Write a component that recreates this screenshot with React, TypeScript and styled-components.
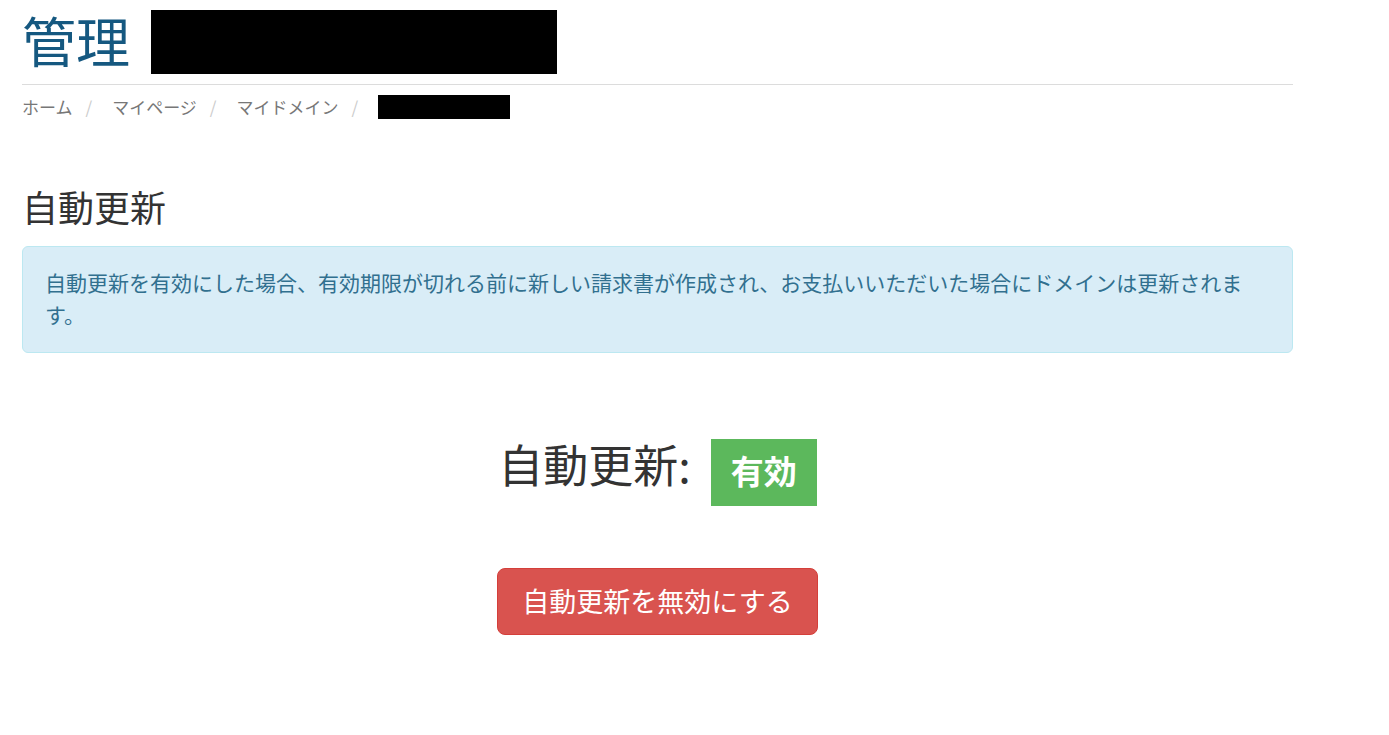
import React from "react";
import styled, { createGlobalStyle } from "styled-components";

const GlobalStyle = createGlobalStyle`
  html, body {
    margin: 0;
    padding: 0;
    background: #fff;
  }
  body {
    font-family: "Noto Sans CJK JP", "Liberation Sans", sans-serif;
    color: #333;
  }
`;

const Container = styled.div`
  width: 1271px;
  margin-left: 22px;
`;

const PageHeader = styled.header`
  display: flex;
  align-items: flex-start;
  gap: 21px;
  padding-top: 10px;
  padding-bottom: 10px;
  border-bottom: 1px solid #dcdcdc;
`;

const Title = styled.h1`
  margin: 0;
  font-size: 54px;
  line-height: 60px;
  font-weight: 400;
  color: #155880;
`;

const Redacted = styled.span<{ $w: number; $h: number }>`
  display: inline-block;
  width: ${(p) => p.$w}px;
  height: ${(p) => p.$h}px;
  background: #000;
  flex-shrink: 0;
`;

const Breadcrumb = styled.nav`
  display: flex;
  align-items: center;
  margin-top: 10px;
  font-size: 17px;
  line-height: 24px;
  color: #777;
`;

const Crumb = styled.span`
  white-space: nowrap;
`;

const Separator = styled.span`
  color: #ccc;
  margin: 0 20px 0 13px;
`;

const SectionTitle = styled.h3`
  margin: 67px 0 0;
  font-size: 36px;
  line-height: 40px;
  font-weight: 400;
  color: #333;
`;

const Alert = styled.div`
  margin-top: 20px;
  padding: 20px 22px 22px;
  background: #d9edf7;
  border: 1px solid #bce8f1;
  border-radius: 6px;
  color: #31708f;
  font-size: 21px;
  line-height: 31.5px;
`;

const StatusRow = styled.div`
  display: flex;
  justify-content: center;
  align-items: flex-start;
  gap: 20px;
  margin-top: 86px;
`;

const StatusText = styled.h2`
  margin: 0;
  font-size: 45px;
  line-height: 50px;
  font-weight: 400;
  color: #333;
`;

const Badge = styled.span<{ $tone: "success" | "danger" }>`
  display: inline-block;
  padding: 15px 20px 19px;
  font-size: 33px;
  line-height: 33px;
  font-weight: 700;
  color: #fff;
  background: ${(p) => (p.$tone === "success" ? "#5cb85c" : "#d9534f")};
`;

const Actions = styled.div`
  display: flex;
  justify-content: center;
  margin-top: 62px;
`;

const DangerButton = styled.button`
  font-family: inherit;
  font-size: 27px;
  line-height: 35px;
  padding: 14px 24px 16px;
  color: #fff;
  background: #d9534f;
  border: 1px solid #d43f3a;
  border-radius: 8px;
  cursor: pointer;

  &:hover {
    background: #c9302c;
  }
`;

export default function App() {
  return (
    <>
      <GlobalStyle />
      <Container>
        <PageHeader>
          <Title>管理</Title>
          <Redacted $w={406} $h={64} />
        </PageHeader>

        <Breadcrumb>
          <Crumb>ホーム</Crumb>
          <Separator>/</Separator>
          <Crumb>マイページ</Crumb>
          <Separator>/</Separator>
          <Crumb>マイドメイン</Crumb>
          <Separator>/</Separator>
          <Redacted $w={132} $h={24} />
        </Breadcrumb>

        <SectionTitle>自動更新</SectionTitle>
        <Alert>
          自動更新を有効にした場合、有効期限が切れる前に新しい請求書が作成され、お支払いいただいた場合にドメインは更新されます。
        </Alert>

        <StatusRow>
          <StatusText>自動更新:</StatusText>
          <Badge $tone="success">有効</Badge>
        </StatusRow>

        <Actions>
          <DangerButton>自動更新を無効にする</DangerButton>
        </Actions>
      </Container>
    </>
  );
}
